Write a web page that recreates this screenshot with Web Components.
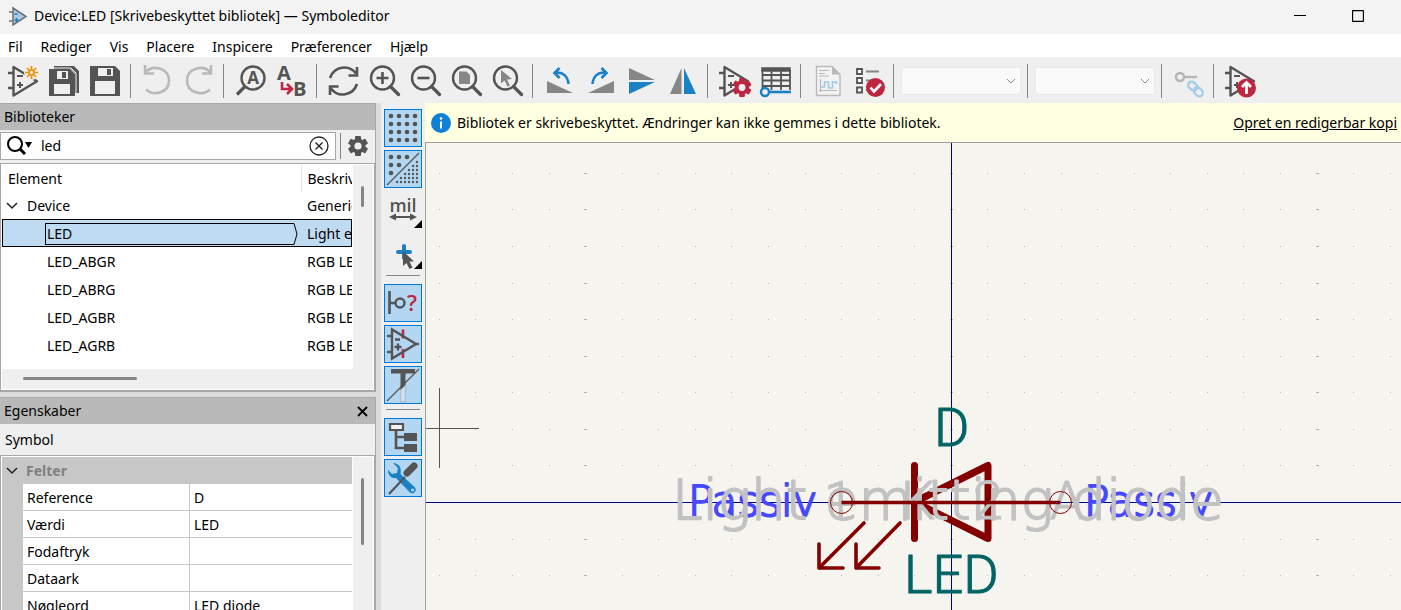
<!DOCTYPE html>
<html lang="da">
<head>
<meta charset="utf-8">
<title>Device:LED [Skrivebeskyttet bibliotek] — Symboleditor</title>
<style>
html, body { height: 100%; margin: 0; }
body { font: 14px/20px "Noto Sans", "Open Sans", sans-serif; color: #000; background: #efefef; overflow: hidden; }
</style>
</head>
<body>
<symbol-editor></symbol-editor>
<script>
const G = '#545454', R = '#bf2641', B = '#1a81c4';
const OPAMP = `<g fill="none" stroke="${G}" stroke-width="2.4" stroke-linejoin="round"><path d="M6.500 2v28.500L30 16.200z"/><path d="M1 8h5M1 23h5"/><path d="M10 11h6M10 20h6M13 17v6" stroke-width="2"/></g>`;
const LENS = `<g fill="none" stroke="${G}" stroke-width="2.400"><circle cx="14.500" cy="13" r="11.500"/><path d="M22.500 21.500l8 8" stroke-width="3.200" stroke-linecap="round"/></g>`;
const gear = (cx, cy, r, fill, hole) => {
  let t = '';
  for (let i = 0; i < 6; i++) t += `<rect x="${cx - r * .3}" y="${cy - r}" width="${r * .6}" height="${r}" rx="1" transform="rotate(${i * 60} ${cx} ${cy})"/>`;
  return `<g fill="${fill}">${t}<circle cx="${cx}" cy="${cy}" r="${r * .76}"/></g><circle cx="${cx}" cy="${cy}" r="${r * .36}" fill="${hole}"/>`;
};
const floppy = (x, y, w, h) => `<path fill="${G}" d="M${x} ${y}h${w - 5}l5 5v${h - 5}h-${w}z"/><path fill="#efefef" d="M${x + 5} ${y + 15}h${w - 10}v${h - 17}h-${w - 10}zM${x + 8} ${y + 2}h${w - 15}v8h-${w - 15}z"/><path fill="${G}" d="M${x + w - 13} ${y + 3}h4v6h-4z"/>`;
const gridDots = () => {
  let s = '';
  for (let y = 4; y < 32; y += 8) for (let x = 4; x < 32; x += 8) s += `<circle cx="${x}" cy="${y}" r="2.300"/>`;
  return `<g fill="${G}">${s}</g>`;
};
const gridMix = () => {
  let s = '';
  [[4, 4], [12, 4], [20, 4], [4, 12], [12, 12], [4, 20]].forEach(([x, y]) => s += `<circle cx="${x}" cy="${y}" r="2.300"/>`);
  for (let k = 0; k < 6; k++) for (let j = 0; j <= k; j++) s += `<circle cx="${30 - 4 * j}" cy="${9 + 4 * k}" r="1.200"/>`;
  return `<g fill="${G}">${s}</g><path d="M0 32L32 0" stroke="${G}" stroke-width="1.200"/>`;
};
const ICONS = {
  newSymbol: `${OPAMP}<circle cx="24.500" cy="7.500" r="7.500" fill="#efefef"/><g stroke="#f29100" stroke-width="1.700" fill="none"><circle cx="24.500" cy="7.500" r="2.600"/><path d="M24.500 1v3M24.500 11v3M18 7.500h3M28 7.500h3M20 3l2 2M27 10l2 2M20 12l2-2M27 5l2-2"/></g>`,
  saveAll: `<path fill="${G}" d="M6 1h20l5 5v22h-4V8l-4-4H6z"/>${floppy(1, 4, 26, 27)}<path d="M3 3h20l5 5v21" fill="none" stroke="#efefef" stroke-width="1"/>`,
  save: floppy(1, 1, 30, 30),
  undo: `<path d="M5 7C12-.500 28 3 28 15.500S13 31.500 5 24.500M4 0v8.500h9" fill="none" stroke="#b9b9b9" stroke-width="2.600"/>`,
  redo: `<path d="M28 7C21-.500 5 3 5 15.500S20 31.500 28 24.500M29 0v8.500h-9" fill="none" stroke="#b9b9b9" stroke-width="2.600"/>`,
  find: `<g fill="none" stroke="${G}" stroke-width="2.400"><circle cx="19" cy="13" r="11.500"/><path d="M11 21.500l-8 8" stroke-width="3.200"/></g><text x="19" y="19" text-anchor="middle" font-size="17" font-weight="700" fill="${G}">A</text>`,
  replace: `<g font-size="20" font-weight="700" fill="${G}"><text x="2" y="15">A</text><text x="18" y="31">B</text></g><path d="M7 17v7h8M12 19l5 5-5 5" fill="none" stroke="${R}" stroke-width="2.600"/>`,
  refresh: `<g fill="none" stroke="${G}" stroke-width="2.600"><path d="M3 13C7 1 22-1 29 8.500M30 2v8.500h-8.500M30 19C26 31 11 33 4 23.500M3 30v-8.500h8.500"/></g>`,
  zoomIn: `${LENS}<path d="M14.500 7v12M8.500 13h12" stroke="${G}" stroke-width="2.600"/>`,
  zoomOut: `${LENS}<path d="M8.500 13h12" stroke="${G}" stroke-width="2.600"/>`,
  zoomFit: `${LENS}<path d="M9 6.500h7.500l3.500 3.500v9H9z" fill="#868686"/>`,
  zoomSel: `${LENS}<path d="M10 5l11 9-5 .500 3 6-2.500 1-3-6-3.500 3z" fill="#868686"/>`,
  rotL: `<path d="M4 16v12h26z" fill="#868686"/><path d="M12 8c8-2 13 4 13.500 11M16.500 3L11.500 8l5 5" fill="none" stroke="${B}" stroke-width="2.600"/>`,
  rotR: `<path d="M30 16v12H4z" fill="#868686"/><path d="M22 8c-8-2-13 4-13.500 11M17.500 3l5 5-5 5" fill="none" stroke="${B}" stroke-width="2.600"/>`,
  flipV: `<path d="M4 3v12h26z" fill="#868686"/><path d="M4 17v12L30 17z" fill="${B}"/>`,
  flipH: `<path d="M15.500 3v26H4z" fill="#868686"/><path d="M18 3v26h12z" fill="${B}"/>`,
  symProps: `${OPAMP}${gear(24, 22.500, 9.500, R, '#efefef')}`,
  table: `<path d="M3 3h28v3H3z" fill="${G}" stroke="${G}" stroke-width="1.500"/><path d="M3.500 5v18M12.500 5v20M22 5v20M31 5v20M3 10h28M3 15.500h28M3 21h28" stroke="${G}" stroke-width="1.800" fill="none"/><path d="M10 27h22" stroke="${B}" stroke-width="2.600"/><circle cx="6" cy="27" r="4" fill="#efefef" stroke="${B}" stroke-width="2.400"/>`,
  sheet: `<path d="M5.500 1.500H21l8 8v21H5.500z" fill="#f3f3f3" stroke="#b9b9b9" stroke-width="1.400"/><path d="M21 1.500v8h8z" fill="#b9b9b9"/><path d="M8 5.500h10M8 8.500h6M8 11h10" stroke="#b9b9b9" stroke-width="1.200"/><path d="M9.500 14v13M8 25.500h18" stroke="#b9b9b9" stroke-width="1.200"/><path d="M10 22h3.500v-5h4v6h4v-6h4v2" stroke="#9fcbe8" stroke-width="1.600" fill="none"/>`,
  checks: `<g fill="#fff" stroke="${G}" stroke-width="1.800"><path d="M5 4h5v5H5zM5 13h5v5H5zM5 22.500h5v5H5z"/></g><path d="M14 6.500h13M14 15.500h10M14 25h10" stroke="#868686" stroke-width="2"/><circle cx="23.500" cy="22.500" r="9.500" fill="${R}"/><path d="M18.500 22.500l3.500 4 7-7.500" fill="none" stroke="#fff" stroke-width="2.600"/>`,
  link: `<circle cx="8" cy="12" r="4" fill="none" stroke="#b5b5b5" stroke-width="2.400"/><path d="M12 12h13" stroke="#b5b5b5" stroke-width="2.400"/><g fill="none" stroke="#a4cfea" stroke-width="2.400" transform="rotate(45 23.500 24)"><rect x="14.500" y="20.500" width="10" height="7" rx="3.500"/><rect x="22.500" y="20.500" width="10" height="7" rx="3.500"/></g>`,
  update: `${OPAMP}<circle cx="22.500" cy="23" r="9.500" fill="${R}"/><path d="M22.500 29V18.500M18 22l4.500-4.500L27 22" fill="none" stroke="#fff" stroke-width="2.800"/>`,
  grid: gridDots(),
  gridMix: gridMix(),
  mil: `<text x="16" y="18" text-anchor="middle" font-size="18" font-weight="600" fill="${G}">mil</text><path d="M6 23h20" stroke="${G}" stroke-width="2"/><path d="M2 23l7-3.500v7zM30 23l-7-3.500v7z" fill="${G}"/>`,
  cursor: `<path d="M17 11v12M11 17h12" stroke="${B}" stroke-width="4" stroke-linecap="round"/><path d="M16 16v15l3.500-3 3 6 3-1.500-3-6h4.500z" fill="${G}"/>`,
  pin: `<path d="M2.500 4v23M3 16h5" stroke="${G}" stroke-width="2.600"/><circle cx="13" cy="16" r="4.500" fill="none" stroke="${G}" stroke-width="2.400"/><text x="25" y="24" text-anchor="middle" font-size="22" font-weight="600" fill="${R}">?</text>`,
  opampPins: `<path d="M16 1.500v9M16 21v9" stroke="${R}" stroke-width="2.600"/><path d="M5 1.500v29L29 16zM0 8h5M0 24h5M28 16h4M8 11.500h5M7.500 19h7M11 15.500v7" fill="none" stroke="${G}" stroke-width="2.400"/>`,
  textT: `<path d="M13.500 16h5v17h-5z" fill="#c9e0f5" stroke="#b5bcc4" stroke-width="1.400"/><path d="M4 0h24v4.500h-9.500V16l-5 5V4.500H4z" fill="${G}"/><path d="M0 32L32 0" stroke="${G}" stroke-width="1.300"/>`,
  tree: `<path d="M9 8v19h9M9 16h9" fill="none" stroke="${G}" stroke-width="2.600"/><path d="M3 3h13v6H3z" fill="#f3f3f3" stroke="${G}" stroke-width="2.200"/><path d="M17 12h13v8H17zM17 23h13v8H17z" fill="${G}"/>`,
  tools: `<path d="M6 1l5 5-1 5-5 1-4-4c0 5 3 8.500 8 8L23 30.500c3 2.500 7.500-1.500 5-5L13.500 12C15 6 12 1 6 1z" fill="${B}"/><circle cx="25.500" cy="28" r="1.600" fill="#b3d7f3"/><path d="M2 32l16-17" stroke="${G}" stroke-width="2.200"/><path d="M20 11l7-7" stroke="${G}" stroke-width="7" stroke-linecap="round"/>`
};

class Base extends HTMLElement {
  constructor() {
    super();
    this.attachShadow({ mode: 'open' }).innerHTML = `<style>*{box-sizing:border-box}button{font:inherit;color:inherit;border:0;padding:0;margin:0;background:none}svg{display:block}${this.css()}</style>${this.html()}`;
  }
  css() { return ''; }
  html() { return ''; }
}
const def = (name, css, html) => customElements.define(name, class extends Base {
  css() { return css; }
  html() { return typeof html === 'function' ? html(this) : html; }
});

def('tool-button', `
:host{display:block;flex:none}
button{position:relative;display:grid;place-items:center;width:38px;height:38px;border:1px solid transparent}
:host([on]) button{background:#b3d7f3;border-color:#0078d7}
:host([menu]) button::after{content:"";position:absolute;right:-1px;bottom:0;border:4px solid #000;border-top-color:transparent;border-left-color:transparent}
svg{overflow:visible;font-family:"Open Sans",sans-serif}`,
  el => `<button type="button" aria-label="${el.getAttribute('label')}"><svg width="32" height="32" viewBox="0 0 32 32">${ICONS[el.getAttribute('icon')]}</svg></button>`);

def('tool-separator', `
:host{display:block;flex:none;width:8px;height:34px;padding-left:3px}
:host([flat]){width:34px;height:8px;padding:2px 0 0}
i{display:block;width:1px;height:100%;background:#868686}
:host([flat]) i{width:100%;height:1px}`, '<i></i>');

def('tool-choice', `
:host{display:grid;flex:none;width:120px;height:28px}
select,svg{grid-area:1/1}
select{appearance:none;width:100%;height:100%;border:1px solid #e9e9e9;border-radius:2px;background:#fafafa;margin:0;opacity:1}
svg{z-index:1;align-self:center;justify-self:end;margin-right:5px}`,
  el => `<select disabled aria-label="${el.getAttribute('label')}"></select><svg width="10" height="6"><path d="M1 1l4 4 4-4" fill="none" stroke="#8f8f8f"/></svg>`);

def('title-bar', `
:host{display:flex;align-items:center;gap:6px;height:34px;padding:0 35px 3px 8px;background:#f3f3f3}
h1{flex:1;margin:0;font:inherit}
nav{display:flex;gap:42px}
button{display:grid;place-items:center;width:16px;height:16px}`,
  `<svg width="20" height="20" viewBox="0 0 20 20"><path d="M5 2v17L18 10.500z" fill="#a9c9e4" stroke="#6b7076" stroke-width="1.500"/><path d="M1 6h4M1 15h4" stroke="#6b7076" stroke-width="1.500"/><path d="M6.500 8h3M6.500 14h4M8.500 12v4" stroke="${B}" stroke-width="1.500"/></svg>
<h1>Device:LED [Skrivebeskyttet bibliotek] — Symboleditor</h1>
<nav><button aria-label="Minimer"><svg width="12" height="12"><path d="M0 5.500h12" stroke="#000"/></svg></button><button aria-label="Maksimer"><svg width="12" height="12"><rect x=".5" y=".5" width="11" height="11" rx="1" fill="none" stroke="#000" stroke-width="1.300"/></svg></button></nav>`);

def('menu-bar', `
:host{display:flex;gap:18px;height:23px;padding:2px 0 0 8px;background:#fff;align-items:center}`,
  ['Fil', 'Rediger', 'Vis', 'Placere', 'Inspicere', 'Præferencer', 'Hjælp'].map(t => `<button type="button">${t}</button>`).join(''));

const btns = list => list.map(([i, l, a]) => i === '|' ? `<tool-separator ${l || ''}></tool-separator>` : i === 'select' ? `<tool-choice label="${l}"></tool-choice>` : `<tool-button icon="${i}" label="${l}" ${a || ''}></tool-button>`).join('');

def('main-toolbar', `
:host{display:flex;align-items:center;gap:3px;height:46px;padding:2px 4px 0;background:#efefef;overflow:hidden}`,
  btns([['newSymbol', 'Nyt symbol'], ['saveAll', 'Gem alle'], ['save', 'Gem'], ['|'], ['undo', 'Fortryd'], ['redo', 'Gentag'], ['|'], ['find', 'Find'], ['replace', 'Erstat'], ['|'], ['refresh', 'Opdater'], ['zoomIn', 'Zoom ind'], ['zoomOut', 'Zoom ud'], ['zoomFit', 'Zoom til side'], ['zoomSel', 'Zoom til markering'], ['|'], ['rotL', 'Roter venstre'], ['rotR', 'Roter højre'], ['flipV', 'Vend lodret'], ['flipH', 'Vend vandret'], ['|'], ['symProps', 'Symbolegenskaber'], ['table', 'Bentabel'], ['|'], ['sheet', 'Datablad'], ['checks', 'Kontroller symbol'], ['|'], ['select', 'Enhed'], ['|'], ['select', 'Kropsstil'], ['|'], ['link', 'Synkroniser ben'], ['|'], ['update', 'Føj til skema']]));

def('side-toolbar', `
:host{display:flex;flex-direction:column;align-items:center;gap:3px;width:44px;padding-top:6px;background:#efefef;flex:none}`,
  btns([['grid', 'Gitter', 'on'], ['gridMix', 'Gittertilsidesættelser', 'on'], ['mil', 'Enheder', 'menu'], ['cursor', 'Markør', 'menu'], ['|', 'flat'], ['pin', 'Bentyper', 'on'], ['opampPins', 'Skjulte ben', 'on'], ['textT', 'Skjulte felter', 'on'], ['|', 'flat'], ['tree', 'Bibliotekstræ', 'on'], ['tools', 'Egenskaber', 'on']]));

def('panel-caption', `
:host{display:flex;align-items:center;justify-content:space-between;flex:none;height:27px;padding:0 7px 0 4px;background:#b9b9b9;border-top:1px solid #a6a6ab}
h2{margin:0;font:inherit}`, `<h2><slot></slot></h2><slot name="action"></slot>`);

const CHEV = `<svg width="12" height="8"><path d="M1 1l5 5 5-5" fill="none" stroke="#222" stroke-width="1.500"/></svg>`;

def('scroll-mark', `
:host{display:block;background:#efefef;width:20px;padding:var(--start) 9px 0 8px}
i{display:block;width:3px;height:var(--size);border-radius:2px;background:#868686}
:host([flat]){width:auto;height:20px;padding:8px 0 0 var(--start)}
:host([flat]) i{width:var(--size);height:3px}`, '<i></i>');

def('library-panel', `
:host{display:block;flex:none;border-right:1px solid #a6a6ab;border-bottom:1px solid #a6a6ab;background:#efefef}
.search{display:flex;align-items:center;height:33px;padding-bottom:1px}
.field{display:flex;flex:1;align-items:center;height:28px;padding:0 6px;border:1px solid #a6a6ab;background:#fff}
input{flex:1;min-width:0;margin:0 0 0 8px;padding:0;border:0;background:none;font:inherit;outline:0}
.line{width:1px;height:26px;margin:0 6px 0 4px;background:#868686}
.opts{width:22px;height:22px;margin-right:6px}
.tree{display:grid;grid-template-columns:minmax(0,1fr) 20px;border:1px solid #a6a6ab;padding:1px;background:#fff}
.view{overflow:hidden;height:204px;margin-right:1px}
table{width:100%;table-layout:fixed;border-collapse:collapse}
th,td{height:28px;padding:1px 0 0;font-weight:400;text-align:left;white-space:nowrap}
tr>:first-child{width:299px;padding-left:45px}
tr>:last-child{padding-left:6px}
thead th:first-child{padding-left:6px}
thead th{height:27px}
thead th:last-child{border-left:1px solid #e5e5e5}
.parent td{height:27px}
.parent td:first-child{padding-left:4px}
.parent span{display:flex;align-items:center;gap:9px}
.sel{background:#bfdbf2;box-shadow:inset 0 0 0 1px #000}
.sel td:first-child{padding-left:43px}
.sel div{display:flex;height:22px;align-items:center;margin-right:3px}
.sel b{flex:1;font-weight:400;height:22px;border:1px solid #000;border-right:0;padding-left:1px}
.sel svg{flex:none}
.across{--start:21px;--size:114px}
.down{--start:21px;--size:21px}`,
  `<panel-caption>Biblioteker</panel-caption>
<div class="search"><label class="field"><svg width="26" height="20" viewBox="0 0 26 20"><circle cx="8" cy="8" r="7" fill="none" stroke="#000" stroke-width="2"/><path d="M13 13l5 5" stroke="#000" stroke-width="3"/><path d="M18 6h7l-3.500 6z"/></svg><input type="text" aria-label="Filter" value="led"><button type="button" aria-label="Ryd"><svg width="20" height="20"><circle cx="10" cy="10" r="9" fill="none" stroke="#222" stroke-width="1.300"/><path d="M6.500 6.500l7 7M13.500 6.500l-7 7" stroke="#222" stroke-width="1.400"/></svg></button></label><div class="line"></div><button class="opts" type="button" aria-label="Indstillinger"><svg width="22" height="22">${gear(11, 11, 10, G, '#efefef')}</svg></button></div>
<div class="tree"><div><div class="view"><table><thead><tr><th>Element</th><th>Beskriv</th></tr></thead><tbody>
<tr class="parent"><td><span>${CHEV}Device</span></td><td>Generic</td></tr>
<tr class="sel"><td><div><b>LED</b><svg width="6" height="22"><path d="M0 .5h2l3 10.500-3 10.500H0" fill="none" stroke="#000"/></svg></div></td><td>Light e</td></tr>
${['LED_ABGR', 'LED_ABRG', 'LED_AGBR', 'LED_AGRB'].map(n => `<tr><td>${n}</td><td>RGB LE</td></tr>`).join('')}
</tbody></table></div><scroll-mark flat class="across"></scroll-mark></div><scroll-mark class="down"></scroll-mark></div>`);

def('property-panel', `
:host{display:flex;flex-direction:column;flex:1;min-height:0;overflow:hidden;border-right:1px solid #a6a6ab;background:#efefef}
p{margin:0;height:31px;line-height:31px;padding-left:5px;flex:none}
.grid{flex:1;min-height:0;display:grid;grid-template-columns:minmax(0,1fr) 20px;border:1px solid #a6a6ab;border-bottom:0;padding:1px 1px 0;background:#fff;overflow:hidden}
.body{background:#c7c7c7;margin-right:1px;overflow:hidden}
h3{display:flex;align-items:center;gap:8px;margin:0;height:27px;padding-left:4px;font:inherit;font-weight:700;color:#808080}
table{width:calc(100% - 21px);margin-left:21px;table-layout:fixed;border-collapse:separate;border-spacing:0;background:#fff}
th,td{height:27px;padding:1px 0 0 4px;font-weight:400;text-align:left;border-bottom:1px solid #c7c7c7;white-space:nowrap}
th{width:167px;border-right:1px solid #c7c7c7}
scroll-mark{--start:21px;--size:67px}`,
  `<panel-caption>Egenskaber<button slot="action" type="button" aria-label="Luk"><svg width="11" height="11"><path d="M1 1l9 9M10 1l-9 9" stroke="#000" stroke-width="1.800"/></svg></button></panel-caption><p>Symbol</p>
<div class="grid"><div class="body"><h3>${CHEV}Felter</h3><table>${[['Reference', 'D'], ['Værdi', 'LED'], ['Fodaftryk', ''], ['Dataark', ''], ['Nøgleord', 'LED diode']].map(([a, b]) => `<tr><th scope="row">${a}</th><td>${b}</td></tr>`).join('')}</table></div><scroll-mark></scroll-mark></div>`);

def('info-bar', `
:host{display:flex;align-items:center;gap:6px;height:40px;padding:1px 4px 0 6px;background:#ffffe1;border-bottom:1px solid #a0a0a0;flex:none}
span{flex:1}
a{color:#000;text-decoration:underline}`,
  `<svg width="20" height="20"><circle cx="10" cy="10" r="10" fill="#0f7fd8"/><circle cx="10" cy="5.500" r="1.300" fill="#fff"/><path d="M10 8.500v7" stroke="#fff" stroke-width="2"/></svg><span><slot></slot></span><a href="#kopi">Opret en redigerbar kopi</a>`);

const canvasGrid = () => {
  const step = 36.57;
  let s = '';
  for (let i = -15; i < 40; i++) for (let j = -10; j < 20; j++) {
    const x = Math.floor(i * step + .3), y = Math.round(j * step);
    const w = i % 10 ? 1 : 3;
    s += `<rect x="${x - (w - 1) / 2}" y="${y}" width="${w}" height="1"/>`;
  }
  return `<g fill="#b4b4b4" shape-rendering="crispEdges">${s}</g>`;
};
def('symbol-canvas', `
:host{display:block;flex:1;min-height:0;overflow:hidden;background:#f5f4ef;border-left:1px solid #a0a0a0}
.wide{font-family:"DejaVu Sans",sans-serif;font-weight:200;stroke-width:2;stroke-linejoin:round}
.thin{font-family:Roboto,sans-serif;font-weight:300;stroke-width:1;stroke-linejoin:round}
.blue{fill:#4848ff;stroke:#4848ff}
.grey{fill:#c2c2c2;stroke:#c2c2c2}
.teal{fill:#006464;stroke:#006464}
.title{font-size:55px}.large{font-size:54px}.small{font-size:42px}`,
  () => `<svg width="100%" height="100%" role="img" aria-label="Symbol LED"><g transform="translate(525 359)">${canvasGrid()}
<g fill="#000084"><rect x="-2000" width="4000" height="1"/><rect y="-2000" width="1" height="4000"/></g>
<g fill="none" stroke="#840000" stroke-linecap="round" stroke-linejoin="round"><path d="M-36.500-36.500v73M37-36.500v73L-36.500 0z" stroke-width="7"/><path d="M-87 21l-45 45M-132 42v24h24M-51 21l-44 45M-95 42v24h23" stroke-width="3.600"/></g>
<g class="wide small blue"><text x="-263" y="14">Passiv</text><text x="133" y="14">Passiv</text></g>
<g class="wide title grey"><text x="-279" y="17">Light emitting diode</text></g>
<g class="thin large grey"><text x="-127" y="17">1</text><text x="-50" y="17">K</text><text x="22" y="17">2</text><text x="99" y="17">A</text></g>
<g fill="none" stroke="#840000"><path d="M-109.500.5h219" stroke-width="3.600"/><g stroke-width="1"><circle cx="-109.500" cy=".5" r="11"/><circle cx="109.500" cy=".5" r="11"/></g></g>
<g class="thin large teal"><text x="-17" y="-56">D</text><text x="-47" y="91">LED</text></g>
<path d="M-525-73.500h53M-511.500-114v80" stroke="#555" fill="none"/>
</g></svg>`);

def('symbol-editor', `
:host{display:flex;flex-direction:column;height:100vh}
main{display:flex;flex:1;min-height:0}
.left{display:flex;flex-direction:column;gap:5px;width:376px;flex:none;background:#dcdcdc}
.sash{width:5px;flex:none;background:#dcdcdc}
.right{display:flex;flex-direction:column;flex:1;min-width:0}`,
  `<title-bar></title-bar><menu-bar></menu-bar><main-toolbar></main-toolbar><main><div class="left"><library-panel></library-panel><property-panel></property-panel></div><div class="sash"></div><side-toolbar></side-toolbar><div class="right"><info-bar>Bibliotek er skrivebeskyttet. Ændringer kan ikke gemmes i dette bibliotek.</info-bar><symbol-canvas></symbol-canvas></div></main>`);
</script>
</body>
</html>
